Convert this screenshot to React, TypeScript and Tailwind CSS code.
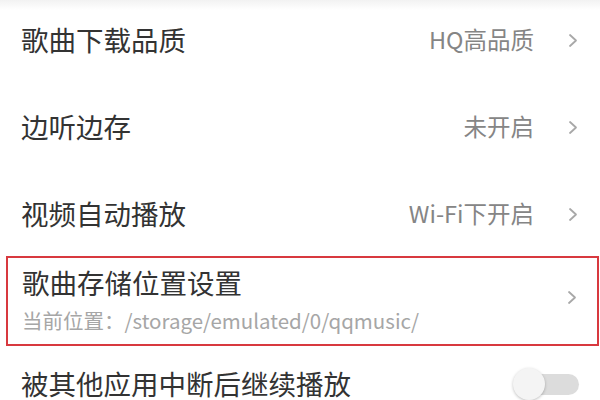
const font = { fontFamily: '"Noto Sans CJK SC", "Noto Sans", sans-serif' };

const Chevron = () => (
  <svg width="10" height="15" viewBox="0 0 10 15" fill="none" className="shrink-0">
    <path d="M2 2 L8 7.5 L2 13" stroke="#a8a8a8" strokeWidth="1.8" strokeLinecap="round" strokeLinejoin="round" />
  </svg>
);

type RowProps = { title: string; value: string; height: string };

const Row = ({ title, value, height }: RowProps) => (
  <div className={`shrink-0 flex items-center justify-between pl-[21px] pr-[22px] ${height}`}>
    <span className="text-[27.5px] leading-none text-[#333]">{title}</span>
    <div className="flex items-center gap-[34px]">
      <span className="text-[23.5px] leading-none text-[#858585]">{value}</span>
      <Chevron />
    </div>
  </div>
);

export default function App() {
  return (
    <div className="w-[600px] h-[400px] overflow-hidden bg-white flex flex-col" style={font}>
      {/* 顶部淡淡的分隔阴影 */}
      <div className="shrink-0 h-[10px] bg-gradient-to-b from-[#f2f2f2] to-white" />
      <Row title="歌曲下载品质" value="HQ高品质" height="h-[70px] pb-[10px]" />
      <Row title="边听边存" value="未开启" height="h-[94px]" />
      <Row title="视频自动播放" value="Wi-Fi下开启" height="h-[80px]" />

      {/* 高亮的存储位置 */}
      <div className="shrink-0 mt-[2px] ml-[6px] mr-[1px] h-[90px] border-2 border-[#d8393f] flex items-start justify-between pl-[14px] pr-[20px]">
        <div className="flex flex-col gap-[13px] pt-[11px]">
          <span className="text-[27.5px] leading-none text-[#333]">歌曲存储位置设置</span>
          <span className="text-[20.5px] leading-none text-[#a6a6a6]">当前位置：/storage/emulated/0/qqmusic/</span>
        </div>
        <div className="self-center -mt-[8px]">
          <Chevron />
        </div>
      </div>

      <div className="shrink-0 flex items-center justify-between pl-[21px] pr-[21px] h-[76px]">
        <span className="text-[27.5px] leading-none text-[#333]">被其他应用中断后继续播放</span>
        <div className="relative w-[66px] h-[30px] flex items-center">
          <div className="absolute left-[6px] right-0 h-[21px] rounded-full bg-[#dcdcdc]" />
          <div className="absolute left-0 w-[32px] h-[32px] rounded-full bg-[#f4f4f4] shadow-[0_1px_3px_rgba(0,0,0,0.25)]" />
        </div>
      </div>
    </div>
  );
}
